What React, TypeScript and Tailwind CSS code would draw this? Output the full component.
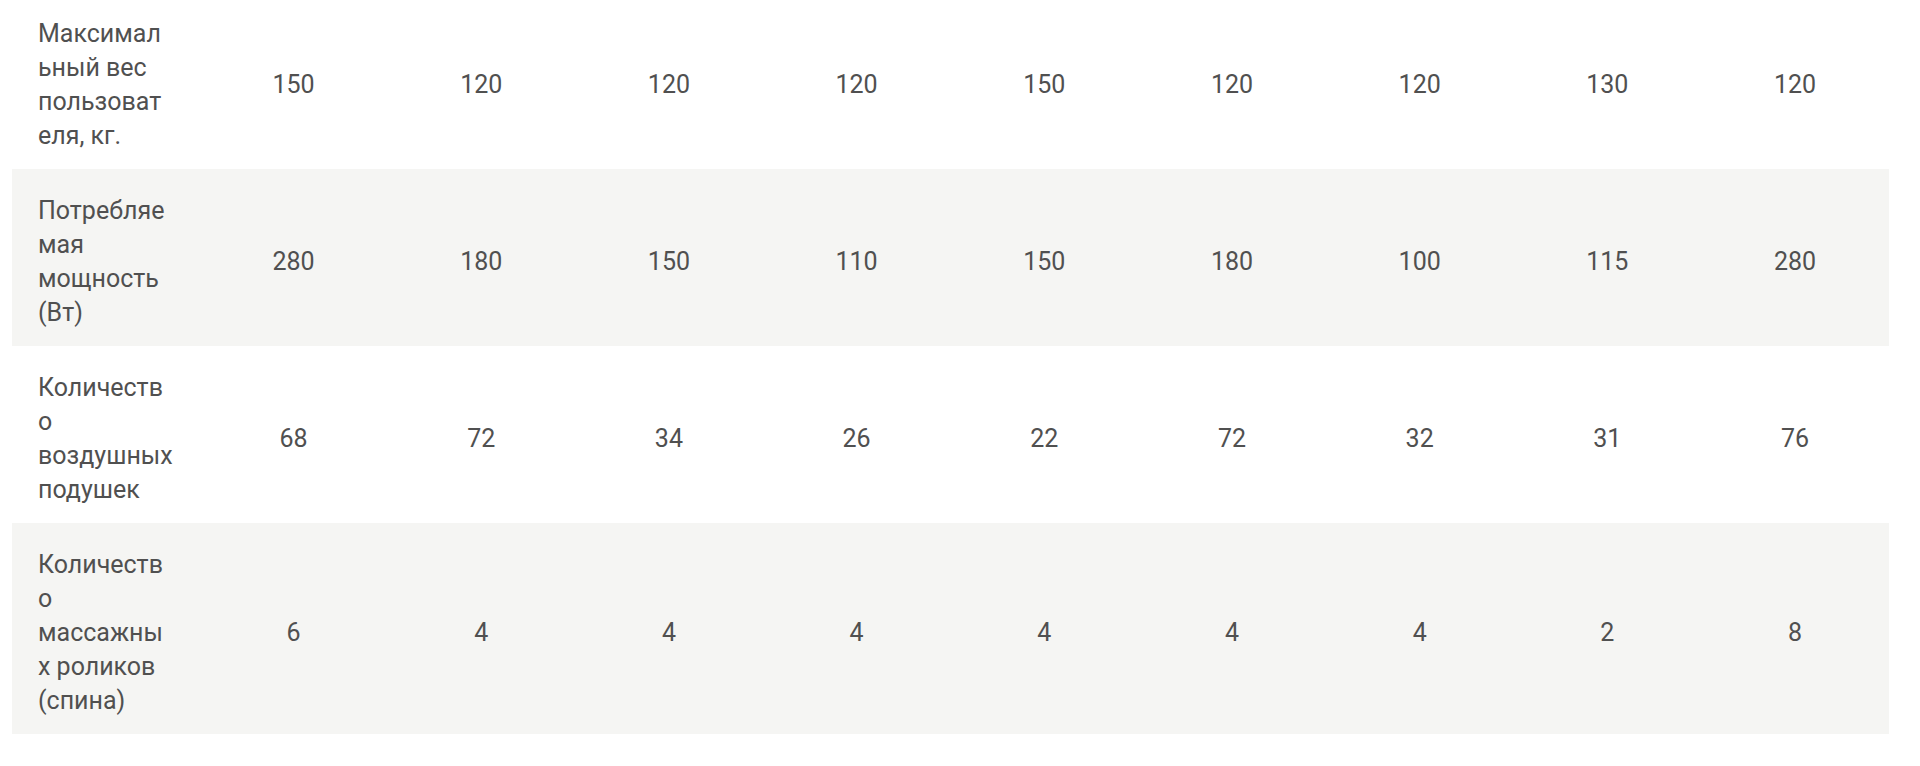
const rows = [
    { label: "Максимальный вес пользователя, кг.", values: ["150", "120", "120", "120", "150", "120", "120", "130", "120"] },
    { label: "Потребляемая мощность (Вт)", values: ["280", "180", "150", "110", "150", "180", "100", "115", "280"] },
    { label: "Количество воздушных подушек", values: ["68", "72", "34", "26", "22", "72", "32", "31", "76"] },
    { label: "Количество массажных роликов (спина)", values: ["6", "4", "4", "4", "4", "4", "4", "2", "8"] },
];

export default function App() {
    return (
        <div className="h-[766px] w-full overflow-hidden bg-white">
            <table
                className="-mt-[8px] ml-[12px] w-[1877px] table-fixed border-collapse text-[25px] leading-[34px] text-[#505050]"
                style={{ fontFamily: "Roboto, 'Noto Sans', sans-serif" }}
            >
                <tbody>
                    {rows.map((r, i) => (
                        <tr key={r.label} className={i % 2 === 1 ? "bg-[#f5f5f3]" : "bg-white"}>
                            <td className="pl-[26px] pr-[27px] pt-[25px] pb-[16px] align-middle [overflow-wrap:anywhere]">
                                {r.label}
                            </td>
                            {r.values.map((v, j) => (
                                <td key={j} className="pt-[25px] pb-[16px] text-center align-middle">
                                    {v}
                                </td>
                            ))}
                        </tr>
                    ))}
                </tbody>
            </table>
        </div>
    );
}
